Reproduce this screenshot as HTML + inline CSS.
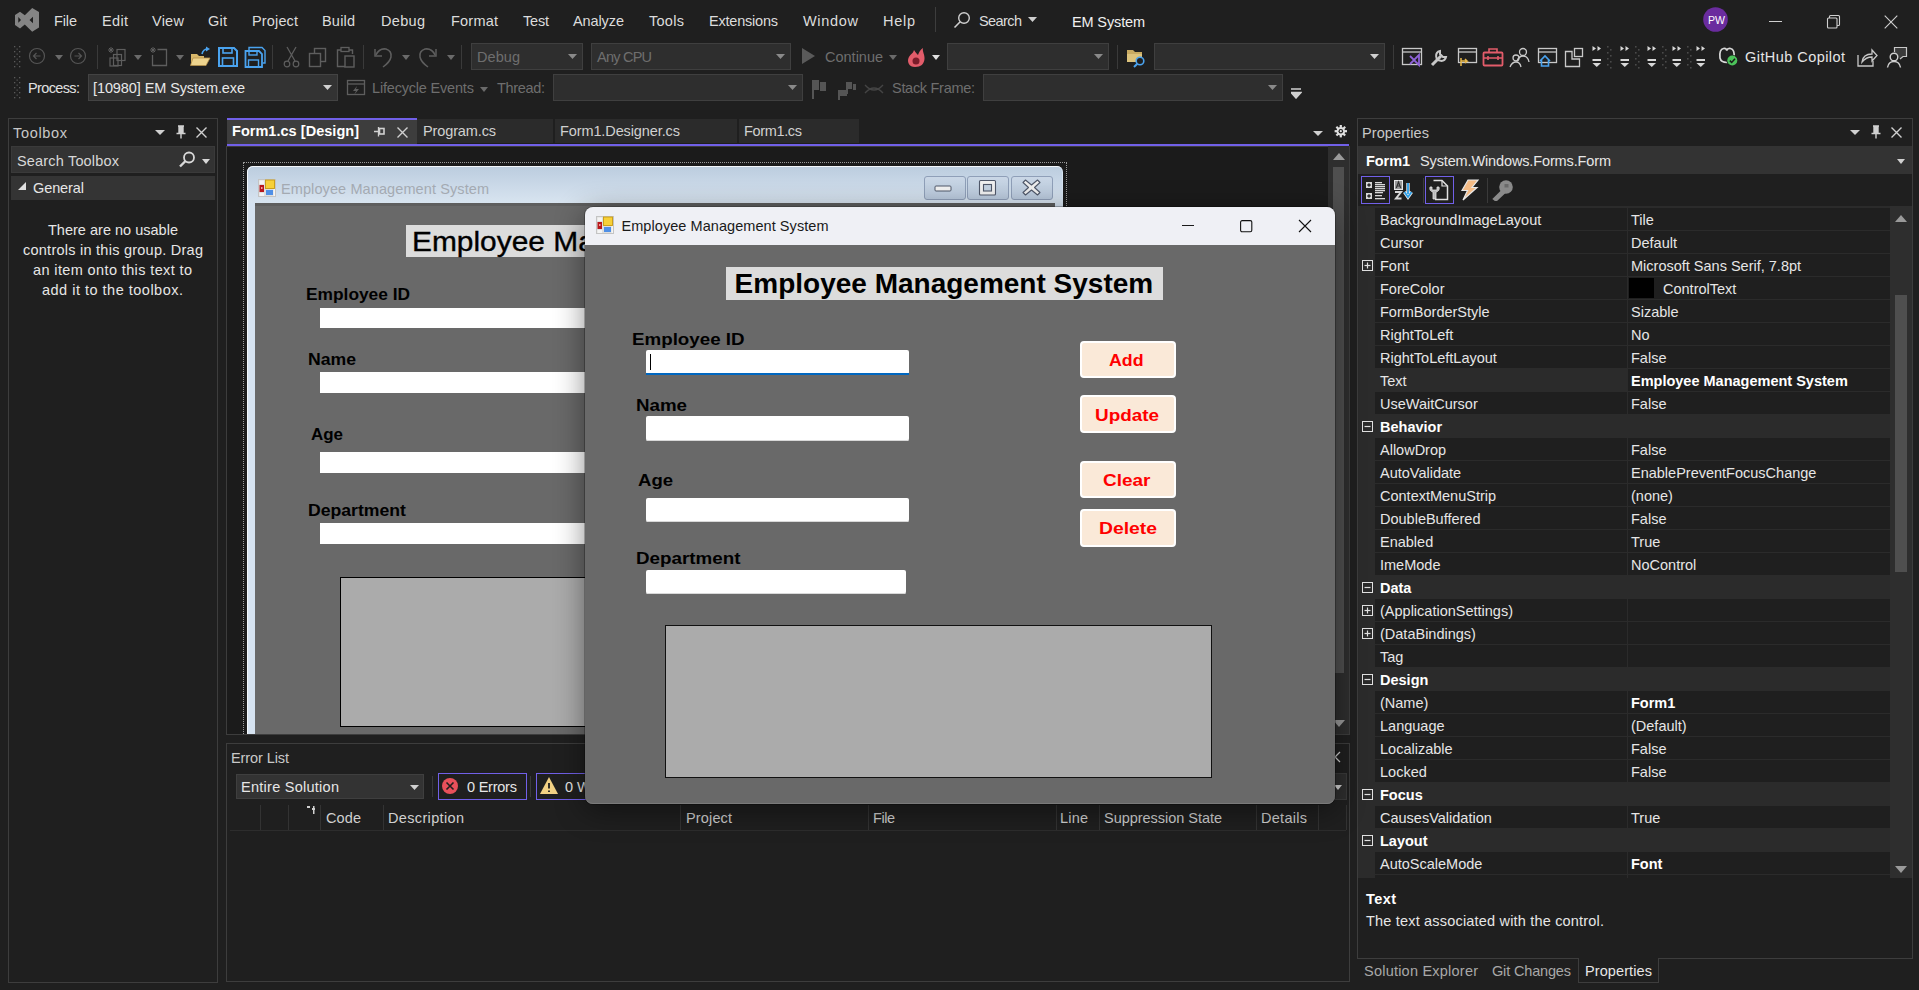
<!DOCTYPE html>
<html><head><meta charset="utf-8"><style>
html,body{margin:0;padding:0;width:1919px;height:990px;overflow:hidden;background:#1f1f1f;}
body{position:relative;font-family:"Liberation Sans",sans-serif;}
.t{position:absolute;white-space:nowrap;line-height:1;}
.r{position:absolute;box-sizing:border-box;}
</style></head><body>
<svg class="r" style="left:15px;top:8px;" width="25" height="25" viewBox="0 0 25 25"><path d="M0 7 L5 3.8 L9.8 7.2 L17.2 0 L24 4 V19.5 L17.2 23.8 L9.8 16.5 L5 20.5 L0 17 Z M3.3 9 L6 12 L3.3 14.7 Z M14.5 12 L18 8.8 V15.3 Z" fill="#848484" fill-rule="evenodd"/></svg>
<div class="t" style="left:54.00px;top:14.03px;font-size:14.5px;color:#dcdcdc;letter-spacing:-0.133px;">File</div>
<div class="t" style="left:102.00px;top:14.03px;font-size:14.5px;color:#dcdcdc;letter-spacing:0.333px;">Edit</div>
<div class="t" style="left:152.00px;top:14.03px;font-size:14.5px;color:#dcdcdc;letter-spacing:0.233px;">View</div>
<div class="t" style="left:208.00px;top:14.03px;font-size:14.5px;color:#dcdcdc;letter-spacing:0.250px;">Git</div>
<div class="t" style="left:252.00px;top:14.03px;font-size:14.5px;color:#dcdcdc;letter-spacing:0.150px;">Project</div>
<div class="t" style="left:322.00px;top:14.03px;font-size:14.5px;color:#dcdcdc;letter-spacing:0.200px;">Build</div>
<div class="t" style="left:381.00px;top:14.03px;font-size:14.5px;color:#dcdcdc;letter-spacing:0.325px;">Debug</div>
<div class="t" style="left:451.00px;top:14.03px;font-size:14.5px;color:#dcdcdc;letter-spacing:0.220px;">Format</div>
<div class="t" style="left:523.00px;top:14.03px;font-size:14.5px;color:#dcdcdc;letter-spacing:-0.200px;">Test</div>
<div class="t" style="left:573.00px;top:14.03px;font-size:14.5px;color:#dcdcdc;letter-spacing:-0.100px;">Analyze</div>
<div class="t" style="left:649.00px;top:14.03px;font-size:14.5px;color:#dcdcdc;letter-spacing:0.275px;">Tools</div>
<div class="t" style="left:709.00px;top:14.03px;font-size:14.5px;color:#dcdcdc;letter-spacing:-0.211px;">Extensions</div>
<div class="t" style="left:803.00px;top:14.03px;font-size:14.5px;color:#dcdcdc;letter-spacing:0.660px;">Window</div>
<div class="t" style="left:883.00px;top:14.03px;font-size:14.5px;color:#dcdcdc;letter-spacing:0.733px;">Help</div>
<div class="r" style="left:935px;top:7px;width:1px;height:25px;background:#3d3d3d;"></div>
<svg class="r" style="left:953px;top:11px;" width="18" height="18" viewBox="0 0 18 18"><circle cx="11" cy="7" r="5.3" fill="none" stroke="#cfcfcf" stroke-width="1.4"/><path d="M7.2 10.8 L1.5 16.5" stroke="#cfcfcf" stroke-width="1.6"/></svg>
<div class="t" style="left:979.00px;top:14.03px;font-size:14.5px;color:#dcdcdc;letter-spacing:-0.580px;">Search</div>
<svg class="r" style="left:1028px;top:17px;" width="9" height="5" viewBox="0 0 9 5"><path d="M0 0 H9 L4.5 5 Z" fill="#cfcfcf"/></svg>
<div class="t" style="left:1072.00px;top:15.03px;font-size:14.5px;color:#f0f0f0;letter-spacing:-0.137px;">EM System</div>
<svg class="r" style="left:1703px;top:7px;" width="25" height="25" viewBox="0 0 25 25"><circle cx="12.5" cy="12.5" r="12.3" fill="#6a2c9e"/></svg>
<div class="t" style="left:1707.70px;top:14.77px;font-size:11.5px;color:#ffffff;transform:scaleX(0.9140);transform-origin:0.00px 0;">PW</div>
<div class="r" style="left:1769px;top:21px;width:13px;height:1px;background:#d0d0d0;"></div>
<svg class="r" style="left:1825px;top:14px;" width="16" height="16" viewBox="0 0 16 16"><rect x="2.5" y="4" width="9.5" height="10" rx="1" fill="none" stroke="#d0d0d0" stroke-width="1.1"/><path d="M4.5 4 V2.5 Q4.5 1.5 5.5 1.5 H13.5 Q14.5 1.5 14.5 2.5 V10.5 Q14.5 11.5 13.5 11.5 H12" fill="none" stroke="#d0d0d0" stroke-width="1.1"/></svg>
<svg class="r" style="left:1884px;top:15px;" width="14" height="14" viewBox="0 0 14 14"><path d="M0.7 0.7 L13.3 13.3 M13.3 0.7 L0.7 13.3" stroke="#d0d0d0" stroke-width="1.1"/></svg>
<svg class="r" style="left:14px;top:46px;" width="7" height="22" viewBox="0 0 7 22"><rect x="0" y="0" width="1.3" height="1.3" fill="#5a5a5a"/><rect x="5" y="0" width="1.3" height="1.3" fill="#5a5a5a"/><rect x="2.5" y="2.5" width="1.3" height="1.3" fill="#505050"/><rect x="0" y="5" width="1.3" height="1.3" fill="#5a5a5a"/><rect x="5" y="5" width="1.3" height="1.3" fill="#5a5a5a"/><rect x="2.5" y="7.5" width="1.3" height="1.3" fill="#505050"/><rect x="0" y="10" width="1.3" height="1.3" fill="#5a5a5a"/><rect x="5" y="10" width="1.3" height="1.3" fill="#5a5a5a"/><rect x="2.5" y="12.5" width="1.3" height="1.3" fill="#505050"/><rect x="0" y="15" width="1.3" height="1.3" fill="#5a5a5a"/><rect x="5" y="15" width="1.3" height="1.3" fill="#5a5a5a"/><rect x="2.5" y="17.5" width="1.3" height="1.3" fill="#505050"/><rect x="0" y="20" width="1.3" height="1.3" fill="#5a5a5a"/><rect x="5" y="20" width="1.3" height="1.3" fill="#5a5a5a"/></svg>
<svg class="r" style="left:28px;top:47px;" width="18" height="18" viewBox="0 0 18 18"><circle cx="9" cy="9" r="7.5" fill="none" stroke="#555" stroke-width="1.2"/><path d="M12.5 9 H5.5 M8.5 6 L5.5 9 L8.5 12" fill="none" stroke="#555" stroke-width="1.2"/></svg>
<svg class="r" style="left:55px;top:55px;" width="8" height="5" viewBox="0 0 8 5"><path d="M0 0 H8 L4.0 5 Z" fill="#6a6a6a"/></svg>
<svg class="r" style="left:69px;top:47px;" width="18" height="18" viewBox="0 0 18 18"><circle cx="9" cy="9" r="7.5" fill="none" stroke="#555" stroke-width="1.2"/><path d="M5.5 9 H12.5 M9.5 6 L12.5 9 L9.5 12" fill="none" stroke="#555" stroke-width="1.2"/></svg>
<div class="r" style="left:97px;top:45px;width:1px;height:24px;background:#3a3a3a;"></div>
<svg class="r" style="left:106px;top:46px;" width="22" height="22" viewBox="0 0 22 22"><path d="M5 1 V7 M2 4 H8 M3 2 L7 6 M7 2 L3 6" stroke="#5e5e5e" stroke-width="1"/><rect x="11" y="3.5" width="8" height="11" fill="none" stroke="#5e5e5e" stroke-width="1.2"/><rect x="7.5" y="8.5" width="8" height="11" fill="none" stroke="#5e5e5e" stroke-width="1.2"/><rect x="4" y="12" width="8" height="8" fill="none" stroke="#5e5e5e" stroke-width="1.2"/></svg>
<svg class="r" style="left:134px;top:55px;" width="8" height="5" viewBox="0 0 8 5"><path d="M0 0 H8 L4.0 5 Z" fill="#6a6a6a"/></svg>
<svg class="r" style="left:148px;top:46px;" width="22" height="22" viewBox="0 0 22 22"><path d="M5 1 V7 M2 4 H8 M3 2 L7 6 M7 2 L3 6" stroke="#5e5e5e" stroke-width="1"/><path d="M9.5 3.5 H18.5 V19.5 H4.5 V9" fill="none" stroke="#5e5e5e" stroke-width="1.3"/></svg>
<svg class="r" style="left:176px;top:55px;" width="8" height="5" viewBox="0 0 8 5"><path d="M0 0 H8 L4.0 5 Z" fill="#6a6a6a"/></svg>
<svg class="r" style="left:190px;top:46px;" width="22" height="22" viewBox="0 0 22 22"><path d="M1 8 H7 L9 10 H14 V19 H1 Z" fill="#d9b86a"/><path d="M3 12 H20 L16 19.5 H0.5 Z" fill="#eed48e" stroke="#b6914a" stroke-width="0.8"/><path d="M12 8 Q13 3 18 3" fill="none" stroke="#4aa3ef" stroke-width="1.6"/><path d="M16 0.5 L20 3 L16 5.5 Z" fill="#4aa3ef"/></svg>
<svg class="r" style="left:217px;top:46px;" width="22" height="22" viewBox="0 0 22 22"><path d="M2 2 H17 L20 5 V20 H2 Z" fill="none" stroke="#4aa3ef" stroke-width="2"/><rect x="6" y="2" width="9" height="5" fill="none" stroke="#4aa3ef" stroke-width="1.6"/><rect x="5.5" y="12" width="11" height="8" fill="none" stroke="#4aa3ef" stroke-width="1.6"/></svg>
<svg class="r" style="left:244px;top:46px;" width="22" height="22" viewBox="0 0 22 22"><path d="M5 4 V1.5 H18 L21 4.5 V17 H19" fill="none" stroke="#4aa3ef" stroke-width="1.4"/><path d="M1.5 5 H15 L18 8 V21 H1.5 Z" fill="none" stroke="#4aa3ef" stroke-width="1.8"/><rect x="5" y="5" width="8" height="4" fill="none" stroke="#4aa3ef" stroke-width="1.4"/><rect x="4.5" y="14" width="10" height="7" fill="none" stroke="#4aa3ef" stroke-width="1.4"/></svg>
<div class="r" style="left:272px;top:45px;width:1px;height:24px;background:#3a3a3a;"></div>
<svg class="r" style="left:283px;top:46px;" width="18" height="22" viewBox="0 0 18 22"><path d="M4 1 L12 15 M13 1 L5 15" stroke="#5e5e5e" stroke-width="1.3"/><circle cx="4" cy="18" r="2.8" fill="none" stroke="#5e5e5e" stroke-width="1.2"/><circle cx="13" cy="18" r="2.8" fill="none" stroke="#5e5e5e" stroke-width="1.2"/></svg>
<svg class="r" style="left:308px;top:46px;" width="20" height="22" viewBox="0 0 20 22"><rect x="6.5" y="2.5" width="11" height="13" fill="none" stroke="#5e5e5e" stroke-width="1.4"/><rect x="1.5" y="7.5" width="11" height="13" fill="#1f1f1f" stroke="#5e5e5e" stroke-width="1.4"/></svg>
<svg class="r" style="left:336px;top:46px;" width="20" height="22" viewBox="0 0 20 22"><path d="M5 4 H1.5 V20.5 H9 M13 4 H16.5 V8" fill="none" stroke="#5e5e5e" stroke-width="1.4"/><rect x="5" y="1.5" width="8" height="4" fill="none" stroke="#5e5e5e" stroke-width="1.3"/><rect x="9" y="10" width="9" height="11" fill="none" stroke="#5e5e5e" stroke-width="1.4"/></svg>
<div class="r" style="left:363px;top:45px;width:1px;height:24px;background:#3a3a3a;"></div>
<svg class="r" style="left:373px;top:46px;" width="20" height="22" viewBox="0 0 20 22"><path d="M3 9 Q6 2 13 3 Q19 5 18 11 Q17 16 10 21" fill="none" stroke="#5e5e5e" stroke-width="1.5"/><path d="M2 3 V10 H9" fill="none" stroke="#5e5e5e" stroke-width="1.5"/></svg>
<svg class="r" style="left:402px;top:55px;" width="8" height="5" viewBox="0 0 8 5"><path d="M0 0 H8 L4.0 5 Z" fill="#6a6a6a"/></svg>
<svg class="r" style="left:418px;top:46px;" width="20" height="22" viewBox="0 0 20 22"><path d="M17 9 Q14 2 7 3 Q1 5 2 11 Q3 16 10 21" fill="none" stroke="#5e5e5e" stroke-width="1.5"/><path d="M18 3 V10 H11" fill="none" stroke="#5e5e5e" stroke-width="1.5"/></svg>
<svg class="r" style="left:447px;top:55px;" width="8" height="5" viewBox="0 0 8 5"><path d="M0 0 H8 L4.0 5 Z" fill="#6a6a6a"/></svg>
<div class="r" style="left:461px;top:45px;width:1px;height:24px;background:#3a3a3a;"></div>
<div class="r" style="left:471px;top:43px;width:112px;height:27px;background:#2e2e2e;box-shadow:inset 0 0 0 1px #3f3f3f;"></div>
<div class="t" style="left:477.00px;top:50.23px;font-size:14.5px;color:#6e6e6e;letter-spacing:0.075px;">Debug</div>
<svg class="r" style="left:568px;top:54px;" width="9" height="5" viewBox="0 0 9 5"><path d="M0 0 H9 L4.5 5 Z" fill="#8a8a8a"/></svg>
<div class="r" style="left:591px;top:43px;width:200px;height:27px;background:#2e2e2e;box-shadow:inset 0 0 0 1px #3f3f3f;"></div>
<div class="t" style="left:597.00px;top:50.23px;font-size:14.5px;color:#6e6e6e;letter-spacing:-0.767px;">Any CPU</div>
<svg class="r" style="left:776px;top:54px;" width="9" height="5" viewBox="0 0 9 5"><path d="M0 0 H9 L4.5 5 Z" fill="#8a8a8a"/></svg>
<svg class="r" style="left:801px;top:47px;" width="16" height="18" viewBox="0 0 16 18"><path d="M1 1 L14 9 L1 17 Z" fill="#5a5a5a"/></svg>
<div class="t" style="left:825.00px;top:50.23px;font-size:14.5px;color:#6e6e6e;">Continue</div>
<svg class="r" style="left:889px;top:55px;" width="8" height="5" viewBox="0 0 8 5"><path d="M0 0 H8 L4.0 5 Z" fill="#6a6a6a"/></svg>
<svg class="r" style="left:905px;top:46px;" width="22" height="22" viewBox="0 0 22 22"><path d="M10 21 C4 21 2 16 3.5 12 C5 8 8 8 9 4 C11 7 12 8 13 9 C14 6 15 4 18 2 C17 5 20 9 19.5 13 C19 18 16 21 10 21 Z" fill="#e25c6a"/><circle cx="11" cy="15" r="3.5" fill="#7a1c2a"/></svg>
<svg class="r" style="left:932px;top:55px;" width="8" height="5" viewBox="0 0 8 5"><path d="M0 0 H8 L4.0 5 Z" fill="#e0e0e0"/></svg>
<div class="r" style="left:947px;top:43px;width:162px;height:27px;background:#2e2e2e;box-shadow:inset 0 0 0 1px #3f3f3f;"></div>
<svg class="r" style="left:1094px;top:54px;" width="9" height="5" viewBox="0 0 9 5"><path d="M0 0 H9 L4.5 5 Z" fill="#8a8a8a"/></svg>
<div class="r" style="left:1117px;top:45px;width:1px;height:24px;background:#3a3a3a;"></div>
<svg class="r" style="left:1126px;top:47px;" width="22" height="22" viewBox="0 0 22 22"><path d="M1 3 H7 L9 5 H16 V15 H1 Z" fill="#c8aa62"/><path d="M1 7 H16 V15 H1 Z" fill="#dcc27c"/><circle cx="14" cy="14" r="3.8" fill="#1f1f1f" stroke="#4aa3ef" stroke-width="1.6"/><path d="M11.3 16.7 L8 20" stroke="#4aa3ef" stroke-width="2"/></svg>
<div class="r" style="left:1154px;top:43px;width:231px;height:27px;background:#2e2e2e;box-shadow:inset 0 0 0 1px #3f3f3f;"></div>
<svg class="r" style="left:1370px;top:54px;" width="9" height="5" viewBox="0 0 9 5"><path d="M0 0 H9 L4.5 5 Z" fill="#d0d0d0"/></svg>
<div class="r" style="left:1393px;top:45px;width:1px;height:24px;background:#3a3a3a;"></div>
<svg class="r" style="left:1401px;top:46px;" width="24" height="22" viewBox="0 0 24 22"><rect x="1.5" y="2.5" width="19" height="16" fill="none" stroke="#c8c8c8" stroke-width="1.3"/><path d="M1.5 6 H20.5" stroke="#c8c8c8" stroke-width="1.3"/><path d="M9 10 L13 14 L18 9 V19 L13 14 L9 18" fill="none" stroke="#8f63d8" stroke-width="1.8"/></svg>
<svg class="r" style="left:1429px;top:46px;" width="22" height="22" viewBox="0 0 22 22"><path d="M3 19 L12 10" stroke="#c8c8c8" stroke-width="3"/><path d="M11 5 A5 5 0 1 0 17 11 L14 11 L11 8 Z" fill="none" stroke="#c8c8c8" stroke-width="2"/></svg>
<svg class="r" style="left:1456px;top:46px;" width="22" height="22" viewBox="0 0 22 22"><rect x="2.5" y="2.5" width="18" height="14" fill="none" stroke="#c8c8c8" stroke-width="1.3"/><path d="M2.5 6 H20.5" stroke="#c8c8c8" stroke-width="1.3"/><path d="M5 12 V20 M5 15 H11 L9 13 M11 15 L9 17" fill="none" stroke="#e8b84a" stroke-width="1.5"/></svg>
<svg class="r" style="left:1482px;top:46px;" width="22" height="22" viewBox="0 0 22 22"><rect x="1.5" y="6.5" width="19" height="13" rx="1" fill="none" stroke="#e25c6a" stroke-width="1.8"/><path d="M7 6.5 V3 H15 V6.5 M1.5 12 H20.5 M6 10 V14 M16 10 V14" fill="none" stroke="#e25c6a" stroke-width="1.6"/></svg>
<svg class="r" style="left:1509px;top:46px;" width="22" height="22" viewBox="0 0 22 22"><circle cx="14" cy="6" r="3.5" fill="none" stroke="#c8c8c8" stroke-width="1.3"/><path d="M8 15 Q10 10 14 10 Q19 10 20 16" fill="none" stroke="#c8c8c8" stroke-width="1.3"/><circle cx="7" cy="12" r="3" fill="none" stroke="#c8c8c8" stroke-width="1.3"/><path d="M1 21 Q3 16 7 16 Q11 16 12 21" fill="none" stroke="#c8c8c8" stroke-width="1.3"/></svg>
<svg class="r" style="left:1536px;top:46px;" width="22" height="22" viewBox="0 0 22 22"><rect x="2.5" y="2.5" width="18" height="14" fill="none" stroke="#c8c8c8" stroke-width="1.3"/><path d="M2.5 6 H20.5" stroke="#c8c8c8" stroke-width="1.3"/><path d="M4 15 L9 10 L14 15 M5.5 14 V20 H12.5 V14" fill="none" stroke="#4aa3ef" stroke-width="1.6"/></svg>
<svg class="r" style="left:1563px;top:46px;" width="22" height="22" viewBox="0 0 22 22"><path d="M2.5 5.5 H9 V13 H16.5 V20.5 H2.5 Z" fill="none" stroke="#c8c8c8" stroke-width="1.3"/><rect x="11.5" y="2.5" width="8" height="8" fill="none" stroke="#c8c8c8" stroke-width="1.3"/></svg>
<svg class="r" style="left:1592px;top:46px;" width="10" height="22" viewBox="0 0 10 22"><path d="M0.5 0 L4 2.5 L0.5 5 Z M5.5 0 L9 2.5 L5.5 5 Z" fill="#d8d8d8"/><rect x="0.5" y="13" width="8.5" height="2" fill="#d8d8d8"/><path d="M0.5 17 H9 L4.75 21 Z" fill="#d8d8d8"/></svg>
<svg class="r" style="left:1607px;top:46px;" width="5" height="24" viewBox="0 0 5 24"><rect x="0" y="0" width="1.6" height="1.6" fill="#4a4a4a"/><rect x="3" y="3" width="1.6" height="1.6" fill="#4a4a4a"/><rect x="0" y="6" width="1.6" height="1.6" fill="#4a4a4a"/><rect x="3" y="9" width="1.6" height="1.6" fill="#4a4a4a"/><rect x="0" y="12" width="1.6" height="1.6" fill="#4a4a4a"/><rect x="3" y="15" width="1.6" height="1.6" fill="#4a4a4a"/><rect x="0" y="18" width="1.6" height="1.6" fill="#4a4a4a"/><rect x="3" y="21" width="1.6" height="1.6" fill="#4a4a4a"/></svg>
<svg class="r" style="left:1620px;top:46px;" width="10" height="22" viewBox="0 0 10 22"><path d="M0.5 0 L4 2.5 L0.5 5 Z M5.5 0 L9 2.5 L5.5 5 Z" fill="#d8d8d8"/><rect x="0.5" y="13" width="8.5" height="2" fill="#d8d8d8"/><path d="M0.5 17 H9 L4.75 21 Z" fill="#d8d8d8"/></svg>
<svg class="r" style="left:1635px;top:46px;" width="5" height="24" viewBox="0 0 5 24"><rect x="0" y="0" width="1.6" height="1.6" fill="#4a4a4a"/><rect x="3" y="3" width="1.6" height="1.6" fill="#4a4a4a"/><rect x="0" y="6" width="1.6" height="1.6" fill="#4a4a4a"/><rect x="3" y="9" width="1.6" height="1.6" fill="#4a4a4a"/><rect x="0" y="12" width="1.6" height="1.6" fill="#4a4a4a"/><rect x="3" y="15" width="1.6" height="1.6" fill="#4a4a4a"/><rect x="0" y="18" width="1.6" height="1.6" fill="#4a4a4a"/><rect x="3" y="21" width="1.6" height="1.6" fill="#4a4a4a"/></svg>
<svg class="r" style="left:1647px;top:46px;" width="10" height="22" viewBox="0 0 10 22"><path d="M0.5 0 L4 2.5 L0.5 5 Z M5.5 0 L9 2.5 L5.5 5 Z" fill="#d8d8d8"/><rect x="0.5" y="13" width="8.5" height="2" fill="#d8d8d8"/><path d="M0.5 17 H9 L4.75 21 Z" fill="#d8d8d8"/></svg>
<svg class="r" style="left:1662px;top:46px;" width="5" height="24" viewBox="0 0 5 24"><rect x="0" y="0" width="1.6" height="1.6" fill="#4a4a4a"/><rect x="3" y="3" width="1.6" height="1.6" fill="#4a4a4a"/><rect x="0" y="6" width="1.6" height="1.6" fill="#4a4a4a"/><rect x="3" y="9" width="1.6" height="1.6" fill="#4a4a4a"/><rect x="0" y="12" width="1.6" height="1.6" fill="#4a4a4a"/><rect x="3" y="15" width="1.6" height="1.6" fill="#4a4a4a"/><rect x="0" y="18" width="1.6" height="1.6" fill="#4a4a4a"/><rect x="3" y="21" width="1.6" height="1.6" fill="#4a4a4a"/></svg>
<svg class="r" style="left:1672px;top:46px;" width="10" height="22" viewBox="0 0 10 22"><path d="M0.5 0 L4 2.5 L0.5 5 Z M5.5 0 L9 2.5 L5.5 5 Z" fill="#d8d8d8"/><rect x="0.5" y="13" width="8.5" height="2" fill="#d8d8d8"/><path d="M0.5 17 H9 L4.75 21 Z" fill="#d8d8d8"/></svg>
<svg class="r" style="left:1687px;top:46px;" width="5" height="24" viewBox="0 0 5 24"><rect x="0" y="0" width="1.6" height="1.6" fill="#4a4a4a"/><rect x="3" y="3" width="1.6" height="1.6" fill="#4a4a4a"/><rect x="0" y="6" width="1.6" height="1.6" fill="#4a4a4a"/><rect x="3" y="9" width="1.6" height="1.6" fill="#4a4a4a"/><rect x="0" y="12" width="1.6" height="1.6" fill="#4a4a4a"/><rect x="3" y="15" width="1.6" height="1.6" fill="#4a4a4a"/><rect x="0" y="18" width="1.6" height="1.6" fill="#4a4a4a"/><rect x="3" y="21" width="1.6" height="1.6" fill="#4a4a4a"/></svg>
<svg class="r" style="left:1696px;top:46px;" width="10" height="22" viewBox="0 0 10 22"><path d="M0.5 0 L4 2.5 L0.5 5 Z M5.5 0 L9 2.5 L5.5 5 Z" fill="#d8d8d8"/><rect x="0.5" y="13" width="8.5" height="2" fill="#d8d8d8"/><path d="M0.5 17 H9 L4.75 21 Z" fill="#d8d8d8"/></svg>
<svg class="r" style="left:1718px;top:46px;" width="24" height="24" viewBox="0 0 24 24"><path d="M2 12 Q1 3.5 5.5 2.5 Q8.3 2 8.8 4.5 Q9.5 2 12.5 2.5 Q17 3.5 16 12 Q15 16.5 9 16.5 Q3 16.5 2 12 Z" fill="none" stroke="#d8d8d8" stroke-width="1.7"/><circle cx="14.3" cy="14.5" r="5.8" fill="#1f1f1f"/><circle cx="14.3" cy="14.5" r="5" fill="#4cc35a"/><path d="M11.8 14.6 L13.7 16.5 L17 12.8" fill="none" stroke="#1a1a1a" stroke-width="1.5"/></svg>
<div class="t" style="left:1745.00px;top:50.23px;font-size:14.5px;color:#e6e6e6;letter-spacing:0.438px;">GitHub Copilot</div>
<svg class="r" style="left:1856px;top:46px;" width="22" height="22" viewBox="0 0 22 22"><path d="M2 9 V20 H17 V15" fill="none" stroke="#c8c8c8" stroke-width="1.3"/><path d="M6 16 Q7 8 16 8 V4 L21 9.5 L16 15 V11 Q10 11 6 16 Z" fill="none" stroke="#c8c8c8" stroke-width="1.3"/></svg>
<svg class="r" style="left:1886px;top:46px;" width="24" height="22" viewBox="0 0 24 22"><path d="M8.5 6 V1.5 H20.5 V10.5 H17 L14 13" fill="#3a3a3a" stroke="#c8c8c8" stroke-width="1.2"/><circle cx="8" cy="11" r="3.8" fill="#1f1f1f" stroke="#d0d0d0" stroke-width="1.4"/><path d="M1.5 21.5 Q2.5 15.5 8 15.5 Q13.5 15.5 14.5 21.5" fill="none" stroke="#d0d0d0" stroke-width="1.4"/></svg>
<svg class="r" style="left:14px;top:77px;" width="7" height="22" viewBox="0 0 7 22"><rect x="0" y="0" width="1.3" height="1.3" fill="#5a5a5a"/><rect x="5" y="0" width="1.3" height="1.3" fill="#5a5a5a"/><rect x="2.5" y="2.5" width="1.3" height="1.3" fill="#505050"/><rect x="0" y="5" width="1.3" height="1.3" fill="#5a5a5a"/><rect x="5" y="5" width="1.3" height="1.3" fill="#5a5a5a"/><rect x="2.5" y="7.5" width="1.3" height="1.3" fill="#505050"/><rect x="0" y="10" width="1.3" height="1.3" fill="#5a5a5a"/><rect x="5" y="10" width="1.3" height="1.3" fill="#5a5a5a"/><rect x="2.5" y="12.5" width="1.3" height="1.3" fill="#505050"/><rect x="0" y="15" width="1.3" height="1.3" fill="#5a5a5a"/><rect x="5" y="15" width="1.3" height="1.3" fill="#5a5a5a"/><rect x="2.5" y="17.5" width="1.3" height="1.3" fill="#505050"/><rect x="0" y="20" width="1.3" height="1.3" fill="#5a5a5a"/><rect x="5" y="20" width="1.3" height="1.3" fill="#5a5a5a"/></svg>
<div class="t" style="left:28.00px;top:81.03px;font-size:14.5px;color:#e0e0e0;letter-spacing:-0.629px;">Process:</div>
<div class="r" style="left:88px;top:74px;width:250px;height:27px;background:#333333;box-shadow:inset 0 0 0 1px #434343;"></div>
<div class="t" style="left:93.00px;top:81.03px;font-size:14.5px;color:#e8e8e8;letter-spacing:-0.095px;">[10980] EM System.exe</div>
<svg class="r" style="left:323px;top:85px;" width="9" height="5" viewBox="0 0 9 5"><path d="M0 0 H9 L4.5 5 Z" fill="#d0d0d0"/></svg>
<svg class="r" style="left:346px;top:78px;" width="20" height="20" viewBox="0 0 20 20"><rect x="1.5" y="2.5" width="17" height="14" fill="none" stroke="#5e5e5e" stroke-width="1.3"/><path d="M1.5 6 H18.5" stroke="#5e5e5e" stroke-width="1.3"/><path d="M11 8 L7 13 H10 L8 17 L13 11 H10 Z" fill="#5e5e5e"/></svg>
<div class="t" style="left:372.00px;top:81.03px;font-size:14.5px;color:#6e6e6e;letter-spacing:-0.187px;">Lifecycle Events</div>
<svg class="r" style="left:480px;top:87px;" width="8" height="5" viewBox="0 0 8 5"><path d="M0 0 H8 L4.0 5 Z" fill="#6a6a6a"/></svg>
<div class="t" style="left:497.00px;top:81.03px;font-size:14.5px;color:#6e6e6e;letter-spacing:-0.333px;">Thread:</div>
<div class="r" style="left:553px;top:74px;width:250px;height:27px;background:#2e2e2e;box-shadow:inset 0 0 0 1px #3f3f3f;"></div>
<svg class="r" style="left:788px;top:85px;" width="9" height="5" viewBox="0 0 9 5"><path d="M0 0 H9 L4.5 5 Z" fill="#8a8a8a"/></svg>
<svg class="r" style="left:811px;top:78px;" width="18" height="22" viewBox="0 0 18 22"><path d="M2 21 V2" stroke="#555" stroke-width="2"/><rect x="3" y="2" width="5" height="10" fill="#555"/><rect x="9" y="4" width="6" height="9" fill="#555"/></svg>
<svg class="r" style="left:837px;top:78px;" width="20" height="22" viewBox="0 0 20 22"><path d="M2 22 V12" stroke="#555" stroke-width="2"/><rect x="3" y="12" width="7" height="6" fill="#555"/><path d="M10 16 V4" stroke="#555" stroke-width="2"/><rect x="11" y="4" width="4" height="7" fill="#555"/><rect x="16" y="6" width="3" height="6" fill="#555"/></svg>
<svg class="r" style="left:864px;top:80px;" width="20" height="18" viewBox="0 0 20 18"><path d="M1 5 Q10 15 19 5 M1 13 Q10 3 19 13" fill="none" stroke="#444" stroke-width="1.3"/></svg>
<div class="t" style="left:892.00px;top:81.03px;font-size:14.5px;color:#6e6e6e;letter-spacing:-0.291px;">Stack Frame:</div>
<div class="r" style="left:983px;top:74px;width:300px;height:27px;background:#2e2e2e;box-shadow:inset 0 0 0 1px #3f3f3f;"></div>
<svg class="r" style="left:1268px;top:85px;" width="9" height="5" viewBox="0 0 9 5"><path d="M0 0 H9 L4.5 5 Z" fill="#8a8a8a"/></svg>
<svg class="r" style="left:1291px;top:88px;" width="11" height="11" viewBox="0 0 11 11"><path d="M0 1 H10 M0 4.5 H10 L5 10 Z" stroke="#d0d0d0" stroke-width="1.5" fill="#d0d0d0"/></svg>
<div class="r" style="left:8px;top:118px;width:210px;height:865px;background:#1f1f1f;box-shadow:inset 0 0 0 1px #3d3d3d;"></div>
<div class="t" style="left:13.00px;top:126.03px;font-size:14.5px;color:#c8c8c8;letter-spacing:0.667px;">Toolbox</div>
<svg class="r" style="left:155px;top:130px;" width="10" height="5" viewBox="0 0 10 5"><path d="M0 0 H10 L5.0 5 Z" fill="#d0d0d0"/></svg>
<svg class="r" style="left:175px;top:125px;" width="12" height="14" viewBox="0 0 12 14"><path d="M3 1 H9 M4 1 V8 M8 1 V8 M1.5 8.5 H10.5 M6 8.5 V13.5" stroke="#d0d0d0" stroke-width="1.4" fill="none"/><rect x="4" y="1" width="4" height="7" fill="#d0d0d0"/></svg>
<svg class="r" style="left:196px;top:127px;" width="11" height="11" viewBox="0 0 11 11"><path d="M0.5 0.5 L10.5 10.5 M10.5 0.5 L0.5 10.5" stroke="#d0d0d0" stroke-width="1.4"/></svg>
<div class="r" style="left:11px;top:146px;width:204px;height:27px;background:#333333;box-shadow:inset 0 0 0 1px #3a3a3a;"></div>
<div class="t" style="left:17.00px;top:154.03px;font-size:14.5px;color:#d8d8d8;letter-spacing:0.177px;">Search Toolbox</div>
<svg class="r" style="left:178px;top:151px;" width="18" height="18" viewBox="0 0 18 18"><circle cx="11" cy="6.5" r="5" fill="none" stroke="#d8d8d8" stroke-width="1.8"/><path d="M7.5 10 L2 15.5" stroke="#d8d8d8" stroke-width="2.4"/></svg>
<svg class="r" style="left:202px;top:159px;" width="8" height="5" viewBox="0 0 8 5"><path d="M0 0 H8 L4.0 5 Z" fill="#d8d8d8"/></svg>
<div class="r" style="left:11px;top:176px;width:204px;height:24px;background:#343434;"></div>
<svg class="r" style="left:17px;top:181px;" width="10" height="10" viewBox="0 0 10 10"><path d="M9 1 V9 H1 Z" fill="#e0e0e0"/></svg>
<div class="t" style="left:33.00px;top:181.23px;font-size:14.5px;color:#e6e6e6;letter-spacing:-0.100px;">General</div>
<div class="t" style="left:48.00px;top:223.43px;font-size:14.5px;color:#e6e6e6;letter-spacing:0.011px;">There are no usable</div>
<div class="t" style="left:23.00px;top:243.43px;font-size:14.5px;color:#e6e6e6;letter-spacing:0.248px;">controls in this group. Drag</div>
<div class="t" style="left:33.00px;top:263.43px;font-size:14.5px;color:#e6e6e6;letter-spacing:0.379px;">an item onto this text to</div>
<div class="t" style="left:42.00px;top:283.43px;font-size:14.5px;color:#e6e6e6;letter-spacing:0.495px;">add it to the toolbox.</div>
<div class="r" style="left:226px;top:146px;width:1124px;height:589px;background:#1b1b1b;box-shadow:inset 0 0 0 1px #3d3d3d;"></div>
<div class="r" style="left:227px;top:118px;width:190px;height:2px;background:#7160e8;"></div>
<div class="r" style="left:227px;top:120px;width:190px;height:24px;background:#3d3d3d;"></div>
<div class="t" style="left:232.00px;top:124.23px;font-size:14.5px;color:#ffffff;font-weight:bold;letter-spacing:0.031px;">Form1.cs [Design]</div>
<svg class="r" style="left:373px;top:126px;" width="13" height="12" viewBox="0 0 13 12"><path d="M1 5.5 H5 M5.5 1 V10.5" stroke="#d0d0d0" stroke-width="1.3" fill="none"/><rect x="6.5" y="2.5" width="4.5" height="5.5" fill="none" stroke="#d0d0d0" stroke-width="1.6"/></svg>
<svg class="r" style="left:397px;top:127px;" width="11" height="11" viewBox="0 0 11 11"><path d="M0.5 0.5 L10.5 10.5 M10.5 0.5 L0.5 10.5" stroke="#d0d0d0" stroke-width="1.4"/></svg>
<div class="r" style="left:417px;top:119px;width:136px;height:24px;background:#2b2b2b;"></div>
<div class="t" style="left:423.00px;top:124.23px;font-size:14.5px;color:#d0d0d0;letter-spacing:-0.122px;">Program.cs</div>
<div class="r" style="left:555px;top:119px;width:182px;height:24px;background:#2b2b2b;"></div>
<div class="t" style="left:560.00px;top:124.23px;font-size:14.5px;color:#d0d0d0;letter-spacing:-0.106px;">Form1.Designer.cs</div>
<div class="r" style="left:739px;top:119px;width:120px;height:24px;background:#2b2b2b;"></div>
<div class="t" style="left:744.00px;top:124.23px;font-size:14.5px;color:#d0d0d0;letter-spacing:-0.343px;">Form1.cs</div>
<div class="r" style="left:227px;top:144px;width:1122px;height:2px;background:#7160e8;"></div>
<svg class="r" style="left:1313px;top:131px;" width="10" height="5" viewBox="0 0 10 5"><path d="M0 0 H10 L5.0 5 Z" fill="#d0d0d0"/></svg>
<svg class="r" style="left:1334px;top:124px;" width="14" height="14" viewBox="0 0 14 14"><g transform="translate(6.8 7.2)" fill="#e0e0e0"><circle r="4.3"/><rect x="-1.1" y="-6.2" width="2.2" height="2.6" transform="rotate(0)"/><rect x="-1.1" y="-6.2" width="2.2" height="2.6" transform="rotate(45)"/><rect x="-1.1" y="-6.2" width="2.2" height="2.6" transform="rotate(90)"/><rect x="-1.1" y="-6.2" width="2.2" height="2.6" transform="rotate(135)"/><rect x="-1.1" y="-6.2" width="2.2" height="2.6" transform="rotate(180)"/><rect x="-1.1" y="-6.2" width="2.2" height="2.6" transform="rotate(225)"/><rect x="-1.1" y="-6.2" width="2.2" height="2.6" transform="rotate(270)"/><rect x="-1.1" y="-6.2" width="2.2" height="2.6" transform="rotate(315)"/><circle r="2.3" fill="#1f1f1f"/><circle r="1.1" fill="#e0e0e0"/></g></svg>
<div class="r" style="left:1328px;top:146px;width:21px;height:588px;background:#2e2e2e;"></div>
<svg class="r" style="left:1333px;top:153px;" width="12" height="7" viewBox="0 0 12 7"><path d="M0 7 L6 0 L12 7 Z" fill="#9a9a9a"/></svg>
<div class="r" style="left:1333px;top:167px;width:11px;height:506px;background:#4f4f4f;"></div>
<svg class="r" style="left:1333px;top:720px;" width="12" height="7" viewBox="0 0 12 7"><path d="M0 0 L12 0 L6 7 Z" fill="#9a9a9a"/></svg>
<div class="r" style="left:243px;top:162px;width:824px;height:572px;border:1px dotted #9a9a9a;border-bottom:none;"></div>
<div class="r" style="left:247px;top:166px;width:816px;height:568px;background:#d6e3f1;border-radius:6px 6px 0 0;box-shadow:inset 1px 1px 0 #f4f8fc;"></div>
<div class="r" style="left:248px;top:167px;width:814px;height:36px;background:linear-gradient(#bccddf,#d8e4f0);border-radius:5px 5px 0 0;"></div>
<svg class="r" style="left:258px;top:179px;" width="18" height="18" viewBox="0 0 18 18"><rect x="0.5" y="0.5" width="17" height="17" fill="#dedede" stroke="#c4c4c4"/><rect x="1.5" y="1.5" width="4.5" height="3.5" fill="#f4f4f4"/><rect x="1.5" y="14" width="4.5" height="3" fill="#f4f4f4"/><rect x="1.5" y="6" width="4.5" height="7" fill="#b8161a"/><rect x="3" y="8" width="1.5" height="2" fill="#f0a0a0"/><rect x="7.5" y="1" width="9" height="8.5" fill="#f7d038" stroke="#c89a10" stroke-width="0.9"/><rect x="8" y="11" width="7" height="5" fill="#4f8fe6"/><rect x="15.5" y="10" width="1.5" height="7" fill="#f4f4f4"/></svg>
<div class="t" style="left:281.00px;top:181.73px;font-size:14.5px;color:#a4aab2;letter-spacing:0.100px;">Employee Management System</div>
<div class="r" style="left:924px;top:176px;width:42px;height:24px;border:1px solid #8f9fb8;border-radius:3px;background:linear-gradient(#cad7e6,#b9c9dc);"></div>
<div class="r" style="left:967px;top:176px;width:42px;height:24px;border:1px solid #8f9fb8;border-radius:3px;background:linear-gradient(#cad7e6,#b9c9dc);"></div>
<div class="r" style="left:1011px;top:176px;width:42px;height:24px;border:1px solid #8f9fb8;border-radius:3px;background:linear-gradient(#cad7e6,#b9c9dc);"></div>
<svg class="r" style="left:934px;top:185px;" width="20" height="8" viewBox="0 0 20 8"><rect x="1" y="1" width="16" height="5" rx="1" fill="#f2f2f2" stroke="#50586a" stroke-width="1"/></svg>
<svg class="r" style="left:978px;top:179px;" width="19" height="18" viewBox="0 0 19 18"><rect x="1.5" y="1.5" width="16" height="14.5" rx="1" fill="#f0f0f0" stroke="#50586a" stroke-width="1.1"/><rect x="5.5" y="5.5" width="8" height="6.5" fill="#c4d2e2" stroke="#50586a" stroke-width="1.1"/></svg>
<svg class="r" style="left:1022px;top:179px;" width="19" height="17" viewBox="0 0 19 17"><path d="M3.5 1 L9.5 6 L15.5 1 L18 3.5 L12.5 8.5 L18 13.5 L15.5 16 L9.5 11 L3.5 16 L1 13.5 L6.5 8.5 L1 3.5 Z" fill="#efefef" stroke="#50586a" stroke-width="1.1" stroke-linejoin="round"/></svg>
<div class="r" style="left:255px;top:203px;width:800px;height:531px;background:#696969;"></div>
<div class="r" style="left:255px;top:203px;width:800px;height:3px;background:#5e5e5e;"></div>
<div class="r" style="left:406px;top:225px;width:180px;height:32px;background:#dcdcdc;"></div>
<div class="t" style="left:411.50px;top:229.14px;font-size:27px;color:#000000;-webkit-text-stroke:0.35px #000;transform:scaleX(1.1074);transform-origin:0.00px 0;">Employee Management System</div>
<div class="t" style="left:306.00px;top:285.61px;font-size:17px;color:#000000;font-weight:bold;transform:scaleX(1.0196);transform-origin:0.00px 0;">Employee ID</div>
<div class="t" style="left:308.00px;top:350.61px;font-size:17px;color:#000000;font-weight:bold;transform:scaleX(1.0367);transform-origin:0.00px 0;">Name</div>
<div class="t" style="left:311.00px;top:425.61px;font-size:17px;color:#000000;font-weight:bold;transform:scaleX(0.9969);transform-origin:0.00px 0;">Age</div>
<div class="t" style="left:308.00px;top:501.61px;font-size:17px;color:#000000;font-weight:bold;transform:scaleX(1.0370);transform-origin:0.00px 0;">Department</div>
<div class="r" style="left:320px;top:308px;width:266px;height:20px;background:#ffffff;"></div>
<div class="r" style="left:320px;top:372px;width:266px;height:21px;background:#ffffff;"></div>
<div class="r" style="left:320px;top:452px;width:266px;height:21px;background:#ffffff;"></div>
<div class="r" style="left:320px;top:523px;width:266px;height:21px;background:#ffffff;"></div>
<div class="r" style="left:340px;top:577px;width:246px;height:150px;background:#ababab;box-shadow:inset 0 0 0 1px #000000;"></div>
<div class="r" style="left:226px;top:743px;width:1124px;height:239px;background:#1f1f1f;box-shadow:inset 0 0 0 1px #3d3d3d;"></div>
<div class="t" style="left:231.00px;top:750.93px;font-size:14.5px;color:#c8c8c8;letter-spacing:-0.089px;">Error List</div>
<div class="r" style="left:236px;top:774px;width:188px;height:25px;background:#333333;box-shadow:inset 0 0 0 1px #3f3f3f;"></div>
<div class="t" style="left:241.00px;top:779.73px;font-size:14.5px;color:#e6e6e6;letter-spacing:0.264px;">Entire Solution</div>
<svg class="r" style="left:410px;top:785px;" width="9" height="5" viewBox="0 0 9 5"><path d="M0 0 H9 L4.5 5 Z" fill="#d0d0d0"/></svg>
<div class="r" style="left:432px;top:776px;width:1px;height:21px;background:#3a3a3a;"></div>
<div class="r" style="left:438px;top:773px;width:89px;height:27px;background:#1f1f1f;box-shadow:inset 0 0 0 1px #7160e8;"></div>
<svg class="r" style="left:441px;top:777px;" width="18" height="18" viewBox="0 0 18 18"><circle cx="9" cy="9" r="8" fill="#e8505b"/><path d="M5.5 5.5 L12.5 12.5 M12.5 5.5 L5.5 12.5" stroke="#1f1f1f" stroke-width="1.6"/></svg>
<div class="t" style="left:467.00px;top:779.73px;font-size:14.5px;color:#e6e6e6;letter-spacing:-0.229px;">0 Errors</div>
<div class="r" style="left:530px;top:776px;width:1px;height:21px;background:#3a3a3a;"></div>
<div class="r" style="left:536px;top:773px;width:104px;height:27px;background:#1f1f1f;box-shadow:inset 0 0 0 1px #7160e8;"></div>
<svg class="r" style="left:539px;top:776px;" width="20" height="19" viewBox="0 0 20 19"><path d="M10 1 L19 18 H1 Z" fill="#f2d184"/><path d="M10 7 V12.5 M10 14.5 V16" stroke="#1f1f1f" stroke-width="1.8"/></svg>
<div class="t" style="left:565.00px;top:779.73px;font-size:14.5px;color:#e6e6e6;">0 Warnings</div>
<div class="r" style="left:260px;top:805px;width:1px;height:25px;background:#333333;"></div>
<div class="r" style="left:288px;top:805px;width:1px;height:25px;background:#333333;"></div>
<div class="r" style="left:320px;top:805px;width:1px;height:25px;background:#333333;"></div>
<div class="r" style="left:383px;top:805px;width:1px;height:25px;background:#333333;"></div>
<div class="r" style="left:680px;top:805px;width:1px;height:25px;background:#333333;"></div>
<div class="r" style="left:868px;top:805px;width:1px;height:25px;background:#333333;"></div>
<div class="r" style="left:1056px;top:805px;width:1px;height:25px;background:#333333;"></div>
<div class="r" style="left:1099px;top:805px;width:1px;height:25px;background:#333333;"></div>
<div class="r" style="left:1256px;top:805px;width:1px;height:25px;background:#333333;"></div>
<div class="r" style="left:1318px;top:805px;width:1px;height:25px;background:#333333;"></div>
<div class="r" style="left:230px;top:830px;width:1116px;height:1px;background:#2d2d2d;"></div>
<svg class="r" style="left:307px;top:806px;" width="10" height="8" viewBox="0 0 10 8"><path d="M0 0 H3 V2 H0 Z M5 2 H8 V4 H5 Z M7 0 V8" fill="#d0d0d0" stroke="none"/><rect x="6" y="0" width="1.5" height="8" fill="#d0d0d0"/></svg>
<div class="t" style="left:326.00px;top:811.23px;font-size:14.5px;color:#d0d0d0;letter-spacing:0.100px;">Code</div>
<div class="t" style="left:388.00px;top:811.23px;font-size:14.5px;color:#d0d0d0;letter-spacing:0.350px;">Description</div>
<div class="t" style="left:686.00px;top:811.23px;font-size:14.5px;color:#d0d0d0;letter-spacing:0.150px;">Project</div>
<div class="t" style="left:873.00px;top:811.23px;font-size:14.5px;color:#d0d0d0;letter-spacing:-0.467px;">File</div>
<div class="t" style="left:1060.00px;top:811.23px;font-size:14.5px;color:#d0d0d0;letter-spacing:0.200px;">Line</div>
<div class="t" style="left:1104.00px;top:811.23px;font-size:14.5px;color:#d0d0d0;letter-spacing:-0.031px;">Suppression State</div>
<div class="t" style="left:1261.00px;top:811.23px;font-size:14.5px;color:#d0d0d0;letter-spacing:0.283px;">Details</div>
<div class="r" style="left:1190px;top:773px;width:157px;height:27px;background:#2e2e2e;box-shadow:inset 0 0 0 1px #3a3a3a;"></div>
<svg class="r" style="left:1334px;top:785px;" width="8" height="5" viewBox="0 0 8 5"><path d="M0 0 H8 L4.0 5 Z" fill="#d0d0d0"/></svg>
<svg class="r" style="left:1329px;top:751px;" width="12" height="12" viewBox="0 0 12 12"><path d="M1 1 L11 11 M11 1 L1 11" stroke="#d0d0d0" stroke-width="1.3"/></svg>
<div class="r" style="left:1346px;top:805px;width:1px;height:25px;background:#333333;"></div>
<div class="r" style="left:1357px;top:118px;width:556px;height:841px;background:#1f1f1f;box-shadow:inset 0 0 0 1px #3d3d3d;"></div>
<div class="t" style="left:1362.00px;top:126.03px;font-size:14.5px;color:#c8c8c8;letter-spacing:0.100px;">Properties</div>
<svg class="r" style="left:1850px;top:130px;" width="10" height="5" viewBox="0 0 10 5"><path d="M0 0 H10 L5.0 5 Z" fill="#d0d0d0"/></svg>
<svg class="r" style="left:1870px;top:125px;" width="12" height="14" viewBox="0 0 12 14"><path d="M3 1 H9 M4 1 V8 M8 1 V8 M1.5 8.5 H10.5 M6 8.5 V13.5" stroke="#d0d0d0" stroke-width="1.4" fill="none"/><rect x="4" y="1" width="4" height="7" fill="#d0d0d0"/></svg>
<svg class="r" style="left:1891px;top:127px;" width="11" height="11" viewBox="0 0 11 11"><path d="M0.5 0.5 L10.5 10.5 M10.5 0.5 L0.5 10.5" stroke="#d0d0d0" stroke-width="1.4"/></svg>
<div class="r" style="left:1358px;top:146px;width:554px;height:28px;background:#333333;"></div>
<div class="t" style="left:1366.00px;top:154.23px;font-size:14.5px;color:#ffffff;font-weight:bold;letter-spacing:-0.075px;">Form1</div>
<div class="t" style="left:1420.00px;top:154.23px;font-size:14.5px;color:#e6e6e6;letter-spacing:-0.133px;">System.Windows.Forms.Form</div>
<svg class="r" style="left:1897px;top:159px;" width="8" height="5" viewBox="0 0 8 5"><path d="M0 0 H8 L4.0 5 Z" fill="#d0d0d0"/></svg>
<div class="r" style="left:1361px;top:176px;width:29px;height:28px;box-shadow:inset 0 0 0 1px #7160e8;"></div>
<svg class="r" style="left:1366px;top:181px;" width="22" height="20" viewBox="0 0 22 20"><rect x="0" y="1" width="6" height="6" fill="#d8d8d8"/><path d="M3 2.3 V5.7 M1.3 4 H4.7" stroke="#1f1f1f" stroke-width="1.3"/><rect x="0" y="12" width="6" height="6" fill="#d8d8d8"/><path d="M3 13.3 V16.7 M1.3 15 H4.7" stroke="#1f1f1f" stroke-width="1.3"/><rect x="9" y="1" width="7" height="1.3" fill="#d8d8d8"/><rect x="9" y="3" width="10" height="1.3" fill="#d8d8d8"/><rect x="9" y="5" width="10" height="1.3" fill="#d8d8d8"/><rect x="9" y="7" width="10" height="1.3" fill="#d8d8d8"/><rect x="9" y="9" width="10" height="1.3" fill="#d8d8d8"/><rect x="9" y="11" width="8" height="1.3" fill="#d8d8d8"/><rect x="9" y="14" width="7" height="1.3" fill="#d8d8d8"/><rect x="9" y="17" width="10" height="1.3" fill="#d8d8d8"/></svg>
<svg class="r" style="left:1393px;top:179px;" width="24" height="22" viewBox="0 0 24 22"><rect x="1.5" y="1.5" width="8" height="9" fill="#9a9a9a" stroke="#e8e8e8" stroke-width="1"/><path d="M3.3 9 L5.5 3 L7.7 9 M4.2 7 H6.8" stroke="#333" stroke-width="1.2" fill="none"/><path d="M2 13 H8 L3 19.5 H8.5" stroke="#d8d8d8" stroke-width="2" fill="none"/><path d="M15 4 V15 M11.5 13 L15 18 L18.5 13" stroke="#e8e8e8" stroke-width="3.4" fill="none"/><path d="M15 4 V15 M11.5 13 L15 18 L18.5 13" stroke="#2a9ee8" stroke-width="1.8" fill="none"/></svg>
<div class="r" style="left:1423px;top:178px;width:1px;height:25px;background:#3a3a3a;"></div>
<div class="r" style="left:1425px;top:176px;width:29px;height:28px;box-shadow:inset 0 0 0 1px #7160e8;"></div>
<svg class="r" style="left:1428px;top:179px;" width="24" height="22" viewBox="0 0 24 22"><path d="M5.5 1.5 H14 L19.5 7 V20.5 H7" fill="none" stroke="#e0e0e0" stroke-width="1.5"/><path d="M14 1.5 V7 H19.5" fill="none" stroke="#e0e0e0" stroke-width="1.2"/><path d="M2 8 Q1 12 5 13 V20 H8 V13 Q12 12 11 8 L9 8 V11 H4 V8 Z" fill="#b8b8b8" stroke="#e8e8e8" stroke-width="0.8"/></svg>
<svg class="r" style="left:1459px;top:179px;" width="22" height="22" viewBox="0 0 22 22"><path d="M9 1 H19 L13 8.5 H18 L4 21 L8.5 11.5 H3 Z" fill="#f4bb85" stroke="#e8e8e8" stroke-width="1.2"/></svg>
<div class="r" style="left:1487px;top:178px;width:1px;height:25px;background:#3a3a3a;"></div>
<svg class="r" style="left:1491px;top:179px;" width="24" height="22" viewBox="0 0 24 22"><circle cx="15" cy="8" r="6.8" fill="#8a8a8a"/><rect x="13.5" y="5" width="4" height="3.5" fill="#6a6a6a"/><path d="M11.5 11.5 L3 20 L5 21.5 L13.5 13.5 Z" fill="#8a8a8a" stroke="#8a8a8a" stroke-width="2.2"/></svg>
<div class="r" style="left:1358px;top:206px;width:532px;height:672px;background:#2b2b2b;"></div>
<div class="r" style="left:1375px;top:208px;width:252px;height:22px;background:#1f1f1f;"></div>
<div class="r" style="left:1628px;top:208px;width:262px;height:22px;background:#1f1f1f;"></div>
<div class="t" style="left:1380.00px;top:212.53px;font-size:14.5px;color:#e6e6e6;">BackgroundImageLayout</div>
<div class="t" style="left:1631.00px;top:212.53px;font-size:14.5px;color:#e6e6e6;">Tile</div>
<div class="r" style="left:1375px;top:231px;width:252px;height:22px;background:#1f1f1f;"></div>
<div class="r" style="left:1628px;top:231px;width:262px;height:22px;background:#1f1f1f;"></div>
<div class="t" style="left:1380.00px;top:235.53px;font-size:14.5px;color:#e6e6e6;">Cursor</div>
<div class="t" style="left:1631.00px;top:235.53px;font-size:14.5px;color:#e6e6e6;">Default</div>
<div class="r" style="left:1375px;top:254px;width:252px;height:22px;background:#1f1f1f;"></div>
<div class="r" style="left:1628px;top:254px;width:262px;height:22px;background:#1f1f1f;"></div>
<svg class="r" style="left:1362px;top:260px;" width="11" height="11" viewBox="0 0 11 11"><rect x="0.5" y="0.5" width="10" height="10" fill="none" stroke="#e0e0e0" stroke-width="1"/><path d="M2.5 5.5 H8.5" stroke="#e0e0e0" stroke-width="1.2"/><path d="M5.5 2.5 V8.5" stroke="#e0e0e0" stroke-width="1.2"/></svg>
<div class="t" style="left:1380.00px;top:258.53px;font-size:14.5px;color:#e6e6e6;">Font</div>
<div class="t" style="left:1631.00px;top:258.53px;font-size:14.5px;color:#e6e6e6;">Microsoft Sans Serif, 7.8pt</div>
<div class="r" style="left:1375px;top:277px;width:252px;height:22px;background:#1f1f1f;"></div>
<div class="r" style="left:1628px;top:277px;width:262px;height:22px;background:#1f1f1f;"></div>
<div class="t" style="left:1380.00px;top:281.53px;font-size:14.5px;color:#e6e6e6;">ForeColor</div>
<div class="r" style="left:1629px;top:278px;width:25px;height:20px;background:#000000;"></div>
<div class="t" style="left:1663.00px;top:281.53px;font-size:14.5px;color:#e6e6e6;">ControlText</div>
<div class="r" style="left:1375px;top:300px;width:252px;height:22px;background:#1f1f1f;"></div>
<div class="r" style="left:1628px;top:300px;width:262px;height:22px;background:#1f1f1f;"></div>
<div class="t" style="left:1380.00px;top:304.53px;font-size:14.5px;color:#e6e6e6;">FormBorderStyle</div>
<div class="t" style="left:1631.00px;top:304.53px;font-size:14.5px;color:#e6e6e6;">Sizable</div>
<div class="r" style="left:1375px;top:323px;width:252px;height:22px;background:#1f1f1f;"></div>
<div class="r" style="left:1628px;top:323px;width:262px;height:22px;background:#1f1f1f;"></div>
<div class="t" style="left:1380.00px;top:327.53px;font-size:14.5px;color:#e6e6e6;">RightToLeft</div>
<div class="t" style="left:1631.00px;top:327.53px;font-size:14.5px;color:#e6e6e6;">No</div>
<div class="r" style="left:1375px;top:346px;width:252px;height:22px;background:#1f1f1f;"></div>
<div class="r" style="left:1628px;top:346px;width:262px;height:22px;background:#1f1f1f;"></div>
<div class="t" style="left:1380.00px;top:350.53px;font-size:14.5px;color:#e6e6e6;">RightToLeftLayout</div>
<div class="t" style="left:1631.00px;top:350.53px;font-size:14.5px;color:#e6e6e6;">False</div>
<div class="r" style="left:1375px;top:369px;width:252px;height:22px;background:#2b2b2b;"></div>
<div class="r" style="left:1628px;top:369px;width:262px;height:22px;background:#1f1f1f;"></div>
<div class="t" style="left:1380.00px;top:373.53px;font-size:14.5px;color:#e6e6e6;">Text</div>
<div class="t" style="left:1631.00px;top:373.53px;font-size:14.5px;color:#ffffff;font-weight:bold;">Employee Management System</div>
<div class="r" style="left:1375px;top:392px;width:252px;height:22px;background:#1f1f1f;"></div>
<div class="r" style="left:1628px;top:392px;width:262px;height:22px;background:#1f1f1f;"></div>
<div class="t" style="left:1380.00px;top:396.53px;font-size:14.5px;color:#e6e6e6;">UseWaitCursor</div>
<div class="t" style="left:1631.00px;top:396.53px;font-size:14.5px;color:#e6e6e6;">False</div>
<svg class="r" style="left:1362px;top:421px;" width="11" height="11" viewBox="0 0 11 11"><rect x="0.5" y="0.5" width="10" height="10" fill="none" stroke="#e0e0e0" stroke-width="1"/><path d="M2.5 5.5 H8.5" stroke="#e0e0e0" stroke-width="1.2"/></svg>
<div class="t" style="left:1380.00px;top:419.53px;font-size:14.5px;color:#ffffff;font-weight:bold;">Behavior</div>
<div class="r" style="left:1375px;top:438px;width:252px;height:22px;background:#1f1f1f;"></div>
<div class="r" style="left:1628px;top:438px;width:262px;height:22px;background:#1f1f1f;"></div>
<div class="t" style="left:1380.00px;top:442.53px;font-size:14.5px;color:#e6e6e6;">AllowDrop</div>
<div class="t" style="left:1631.00px;top:442.53px;font-size:14.5px;color:#e6e6e6;">False</div>
<div class="r" style="left:1375px;top:461px;width:252px;height:22px;background:#1f1f1f;"></div>
<div class="r" style="left:1628px;top:461px;width:262px;height:22px;background:#1f1f1f;"></div>
<div class="t" style="left:1380.00px;top:465.53px;font-size:14.5px;color:#e6e6e6;">AutoValidate</div>
<div class="t" style="left:1631.00px;top:465.53px;font-size:14.5px;color:#e6e6e6;">EnablePreventFocusChange</div>
<div class="r" style="left:1375px;top:484px;width:252px;height:22px;background:#1f1f1f;"></div>
<div class="r" style="left:1628px;top:484px;width:262px;height:22px;background:#1f1f1f;"></div>
<div class="t" style="left:1380.00px;top:488.53px;font-size:14.5px;color:#e6e6e6;">ContextMenuStrip</div>
<div class="t" style="left:1631.00px;top:488.53px;font-size:14.5px;color:#e6e6e6;">(none)</div>
<div class="r" style="left:1375px;top:507px;width:252px;height:22px;background:#1f1f1f;"></div>
<div class="r" style="left:1628px;top:507px;width:262px;height:22px;background:#1f1f1f;"></div>
<div class="t" style="left:1380.00px;top:511.53px;font-size:14.5px;color:#e6e6e6;">DoubleBuffered</div>
<div class="t" style="left:1631.00px;top:511.53px;font-size:14.5px;color:#e6e6e6;">False</div>
<div class="r" style="left:1375px;top:530px;width:252px;height:22px;background:#1f1f1f;"></div>
<div class="r" style="left:1628px;top:530px;width:262px;height:22px;background:#1f1f1f;"></div>
<div class="t" style="left:1380.00px;top:534.53px;font-size:14.5px;color:#e6e6e6;">Enabled</div>
<div class="t" style="left:1631.00px;top:534.53px;font-size:14.5px;color:#e6e6e6;">True</div>
<div class="r" style="left:1375px;top:553px;width:252px;height:22px;background:#1f1f1f;"></div>
<div class="r" style="left:1628px;top:553px;width:262px;height:22px;background:#1f1f1f;"></div>
<div class="t" style="left:1380.00px;top:557.53px;font-size:14.5px;color:#e6e6e6;">ImeMode</div>
<div class="t" style="left:1631.00px;top:557.53px;font-size:14.5px;color:#e6e6e6;">NoControl</div>
<svg class="r" style="left:1362px;top:582px;" width="11" height="11" viewBox="0 0 11 11"><rect x="0.5" y="0.5" width="10" height="10" fill="none" stroke="#e0e0e0" stroke-width="1"/><path d="M2.5 5.5 H8.5" stroke="#e0e0e0" stroke-width="1.2"/></svg>
<div class="t" style="left:1380.00px;top:580.53px;font-size:14.5px;color:#ffffff;font-weight:bold;">Data</div>
<div class="r" style="left:1375px;top:599px;width:252px;height:22px;background:#1f1f1f;"></div>
<div class="r" style="left:1628px;top:599px;width:262px;height:22px;background:#1f1f1f;"></div>
<svg class="r" style="left:1362px;top:605px;" width="11" height="11" viewBox="0 0 11 11"><rect x="0.5" y="0.5" width="10" height="10" fill="none" stroke="#e0e0e0" stroke-width="1"/><path d="M2.5 5.5 H8.5" stroke="#e0e0e0" stroke-width="1.2"/><path d="M5.5 2.5 V8.5" stroke="#e0e0e0" stroke-width="1.2"/></svg>
<div class="t" style="left:1380.00px;top:603.53px;font-size:14.5px;color:#e6e6e6;">(ApplicationSettings)</div>
<div class="r" style="left:1375px;top:622px;width:252px;height:22px;background:#1f1f1f;"></div>
<div class="r" style="left:1628px;top:622px;width:262px;height:22px;background:#1f1f1f;"></div>
<svg class="r" style="left:1362px;top:628px;" width="11" height="11" viewBox="0 0 11 11"><rect x="0.5" y="0.5" width="10" height="10" fill="none" stroke="#e0e0e0" stroke-width="1"/><path d="M2.5 5.5 H8.5" stroke="#e0e0e0" stroke-width="1.2"/><path d="M5.5 2.5 V8.5" stroke="#e0e0e0" stroke-width="1.2"/></svg>
<div class="t" style="left:1380.00px;top:626.53px;font-size:14.5px;color:#e6e6e6;">(DataBindings)</div>
<div class="r" style="left:1375px;top:645px;width:252px;height:22px;background:#1f1f1f;"></div>
<div class="r" style="left:1628px;top:645px;width:262px;height:22px;background:#1f1f1f;"></div>
<div class="t" style="left:1380.00px;top:649.53px;font-size:14.5px;color:#e6e6e6;">Tag</div>
<svg class="r" style="left:1362px;top:674px;" width="11" height="11" viewBox="0 0 11 11"><rect x="0.5" y="0.5" width="10" height="10" fill="none" stroke="#e0e0e0" stroke-width="1"/><path d="M2.5 5.5 H8.5" stroke="#e0e0e0" stroke-width="1.2"/></svg>
<div class="t" style="left:1380.00px;top:672.53px;font-size:14.5px;color:#ffffff;font-weight:bold;">Design</div>
<div class="r" style="left:1375px;top:691px;width:252px;height:22px;background:#1f1f1f;"></div>
<div class="r" style="left:1628px;top:691px;width:262px;height:22px;background:#1f1f1f;"></div>
<div class="t" style="left:1380.00px;top:695.53px;font-size:14.5px;color:#e6e6e6;">(Name)</div>
<div class="t" style="left:1631.00px;top:695.53px;font-size:14.5px;color:#ffffff;font-weight:bold;">Form1</div>
<div class="r" style="left:1375px;top:714px;width:252px;height:22px;background:#1f1f1f;"></div>
<div class="r" style="left:1628px;top:714px;width:262px;height:22px;background:#1f1f1f;"></div>
<div class="t" style="left:1380.00px;top:718.53px;font-size:14.5px;color:#e6e6e6;">Language</div>
<div class="t" style="left:1631.00px;top:718.53px;font-size:14.5px;color:#e6e6e6;">(Default)</div>
<div class="r" style="left:1375px;top:737px;width:252px;height:22px;background:#1f1f1f;"></div>
<div class="r" style="left:1628px;top:737px;width:262px;height:22px;background:#1f1f1f;"></div>
<div class="t" style="left:1380.00px;top:741.53px;font-size:14.5px;color:#e6e6e6;">Localizable</div>
<div class="t" style="left:1631.00px;top:741.53px;font-size:14.5px;color:#e6e6e6;">False</div>
<div class="r" style="left:1375px;top:760px;width:252px;height:22px;background:#1f1f1f;"></div>
<div class="r" style="left:1628px;top:760px;width:262px;height:22px;background:#1f1f1f;"></div>
<div class="t" style="left:1380.00px;top:764.53px;font-size:14.5px;color:#e6e6e6;">Locked</div>
<div class="t" style="left:1631.00px;top:764.53px;font-size:14.5px;color:#e6e6e6;">False</div>
<svg class="r" style="left:1362px;top:789px;" width="11" height="11" viewBox="0 0 11 11"><rect x="0.5" y="0.5" width="10" height="10" fill="none" stroke="#e0e0e0" stroke-width="1"/><path d="M2.5 5.5 H8.5" stroke="#e0e0e0" stroke-width="1.2"/></svg>
<div class="t" style="left:1380.00px;top:787.53px;font-size:14.5px;color:#ffffff;font-weight:bold;">Focus</div>
<div class="r" style="left:1375px;top:806px;width:252px;height:22px;background:#1f1f1f;"></div>
<div class="r" style="left:1628px;top:806px;width:262px;height:22px;background:#1f1f1f;"></div>
<div class="t" style="left:1380.00px;top:810.53px;font-size:14.5px;color:#e6e6e6;">CausesValidation</div>
<div class="t" style="left:1631.00px;top:810.53px;font-size:14.5px;color:#e6e6e6;">True</div>
<svg class="r" style="left:1362px;top:835px;" width="11" height="11" viewBox="0 0 11 11"><rect x="0.5" y="0.5" width="10" height="10" fill="none" stroke="#e0e0e0" stroke-width="1"/><path d="M2.5 5.5 H8.5" stroke="#e0e0e0" stroke-width="1.2"/></svg>
<div class="t" style="left:1380.00px;top:833.53px;font-size:14.5px;color:#ffffff;font-weight:bold;">Layout</div>
<div class="r" style="left:1375px;top:852px;width:252px;height:22px;background:#1f1f1f;"></div>
<div class="r" style="left:1628px;top:852px;width:262px;height:22px;background:#1f1f1f;"></div>
<div class="t" style="left:1380.00px;top:856.53px;font-size:14.5px;color:#e6e6e6;">AutoScaleMode</div>
<div class="t" style="left:1631.00px;top:856.53px;font-size:14.5px;color:#ffffff;font-weight:bold;">Font</div>
<div class="r" style="left:1375px;top:875px;width:252px;height:3px;background:#1f1f1f;"></div>
<div class="r" style="left:1628px;top:875px;width:262px;height:3px;background:#1f1f1f;"></div>
<div class="r" style="left:1358px;top:878px;width:554px;height:80px;background:#1f1f1f;"></div>
<div class="r" style="left:1890px;top:206px;width:22px;height:672px;background:#2e2e2e;"></div>
<svg class="r" style="left:1895px;top:215px;" width="12" height="7" viewBox="0 0 12 7"><path d="M0 7 L6 0 L12 7 Z" fill="#9a9a9a"/></svg>
<div class="r" style="left:1895px;top:295px;width:12px;height:277px;background:#4f4f4f;"></div>
<svg class="r" style="left:1895px;top:866px;" width="12" height="7" viewBox="0 0 12 7"><path d="M0 0 L12 0 L6 7 Z" fill="#9a9a9a"/></svg>
<div class="t" style="left:1366.00px;top:891.73px;font-size:14.5px;color:#ffffff;font-weight:bold;letter-spacing:0.433px;">Text</div>
<div class="t" style="left:1366.00px;top:914.23px;font-size:14.5px;color:#e6e6e6;letter-spacing:0.186px;">The text associated with the control.</div>
<div class="r" style="left:1578px;top:958px;width:81px;height:25px;background:#1f1f1f;box-shadow:inset 0 0 0 1px #3d3d3d;"></div>
<div class="r" style="left:1579px;top:957px;width:79px;height:2px;background:#1f1f1f;"></div>
<div class="t" style="left:1364.00px;top:963.73px;font-size:14.5px;color:#a8a8a8;letter-spacing:0.225px;">Solution Explorer</div>
<div class="t" style="left:1492.00px;top:963.73px;font-size:14.5px;color:#a8a8a8;letter-spacing:-0.160px;">Git Changes</div>
<div class="t" style="left:1585.00px;top:963.73px;font-size:14.5px;color:#e6e6e6;letter-spacing:0.100px;">Properties</div>
<div class="r" style="left:585px;top:207px;width:750px;height:597px;border-radius:8px;background:#696969;box-shadow:0 6px 30px rgba(0,0,0,0.45),0 0 0 1px rgba(0,0,0,0.25);overflow:hidden;"></div>
<div class="r" style="left:585px;top:207px;width:750px;height:38px;border-radius:8px 8px 0 0;background:#eff0f5;"></div>
<div class="r" style="left:585px;top:796px;width:750px;height:8px;border-radius:0 0 8px 8px;box-shadow:inset 0 -1px 0 #7a7a7a;"></div>
<svg class="r" style="left:596px;top:216px;" width="18" height="18" viewBox="0 0 18 18"><rect x="0.5" y="0.5" width="17" height="17" fill="#dedede" stroke="#c4c4c4"/><rect x="1.5" y="1.5" width="4.5" height="3.5" fill="#f4f4f4"/><rect x="1.5" y="14" width="4.5" height="3" fill="#f4f4f4"/><rect x="1.5" y="6" width="4.5" height="7" fill="#b8161a"/><rect x="3" y="8" width="1.5" height="2" fill="#f0a0a0"/><rect x="7.5" y="1" width="9" height="8.5" fill="#f7d038" stroke="#c89a10" stroke-width="0.9"/><rect x="8" y="11" width="7" height="5" fill="#4f8fe6"/><rect x="15.5" y="10" width="1.5" height="7" fill="#f4f4f4"/></svg>
<div class="t" style="left:621.50px;top:218.73px;font-size:14.5px;color:#1a1a1a;letter-spacing:0.060px;">Employee Management System</div>
<div class="r" style="left:1182px;top:225px;width:12px;height:1px;background:#1a1a1a;"></div>
<svg class="r" style="left:1240px;top:220px;" width="13" height="13" viewBox="0 0 13 13"><rect x="0.6" y="0.6" width="11.2" height="11.2" rx="1.5" fill="none" stroke="#111" stroke-width="1.1"/></svg>
<svg class="r" style="left:1298px;top:219px;" width="14" height="14" viewBox="0 0 14 14"><path d="M1 1 L13 13 M13 1 L1 13" stroke="#111" stroke-width="1.1"/></svg>
<div class="r" style="left:726px;top:267px;width:437px;height:33px;background:#dcdcdc;"></div>
<div class="t" style="left:734.60px;top:270.05px;font-size:28px;color:#000000;font-weight:bold;">Employee Management System</div>
<div class="t" style="left:631.50px;top:330.61px;font-size:17px;color:#000000;font-weight:bold;transform:scaleX(1.1029);transform-origin:0.00px 0;">Employee ID</div>
<div class="t" style="left:635.60px;top:396.71px;font-size:17px;color:#000000;font-weight:bold;transform:scaleX(1.1015);transform-origin:0.00px 0;">Name</div>
<div class="t" style="left:637.80px;top:471.81px;font-size:17px;color:#000000;font-weight:bold;transform:scaleX(1.0903);transform-origin:0.00px 0;">Age</div>
<div class="t" style="left:635.60px;top:549.61px;font-size:17px;color:#000000;font-weight:bold;transform:scaleX(1.1058);transform-origin:0.00px 0;">Department</div>
<div class="r" style="left:646px;top:350px;width:263px;height:25px;background:#ffffff;border-radius:2px;box-shadow:inset 0 -1px 0 #d8d8d8;"></div>
<div class="r" style="left:646px;top:416px;width:263px;height:25px;background:#ffffff;border-radius:2px;box-shadow:inset 0 -1px 0 #d8d8d8;"></div>
<div class="r" style="left:646px;top:498px;width:263px;height:24px;background:#ffffff;border-radius:2px;box-shadow:inset 0 -1px 0 #d8d8d8;"></div>
<div class="r" style="left:646px;top:570px;width:260px;height:24px;background:#ffffff;border-radius:2px;box-shadow:inset 0 -1px 0 #d8d8d8;"></div>
<div class="r" style="left:646px;top:373px;width:263px;height:2px;background:#0067c0;"></div>
<div class="r" style="left:650px;top:354px;width:1px;height:16px;background:#000000;"></div>
<div class="r" style="left:1080px;top:341px;width:96px;height:37px;background:#fae9d8;border:2px solid #ffffff;border-radius:4px;"></div>
<div class="t" style="left:1109.00px;top:351.81px;font-size:17px;color:#ff0000;font-weight:bold;transform:scaleX(1.0455);transform-origin:0.00px 0;">Add</div>
<div class="r" style="left:1080px;top:395px;width:96px;height:38px;background:#fae9d8;border:2px solid #ffffff;border-radius:4px;"></div>
<div class="t" style="left:1094.80px;top:406.61px;font-size:17px;color:#ff0000;font-weight:bold;transform:scaleX(1.1111);transform-origin:0.00px 0;">Update</div>
<div class="r" style="left:1080px;top:461px;width:96px;height:37px;background:#fae9d8;border:2px solid #ffffff;border-radius:4px;"></div>
<div class="t" style="left:1103.00px;top:471.61px;font-size:17px;color:#ff0000;font-weight:bold;transform:scaleX(1.1129);transform-origin:0.00px 0;">Clear</div>
<div class="r" style="left:1080px;top:509px;width:96px;height:38px;background:#fae9d8;border:2px solid #ffffff;border-radius:4px;"></div>
<div class="t" style="left:1098.60px;top:520.21px;font-size:17px;color:#ff0000;font-weight:bold;transform:scaleX(1.1373);transform-origin:0.00px 0;">Delete</div>
<div class="r" style="left:665px;top:625px;width:547px;height:153px;background:#ababab;box-shadow:inset 0 0 0 1px #111111;"></div>
</body></html>
